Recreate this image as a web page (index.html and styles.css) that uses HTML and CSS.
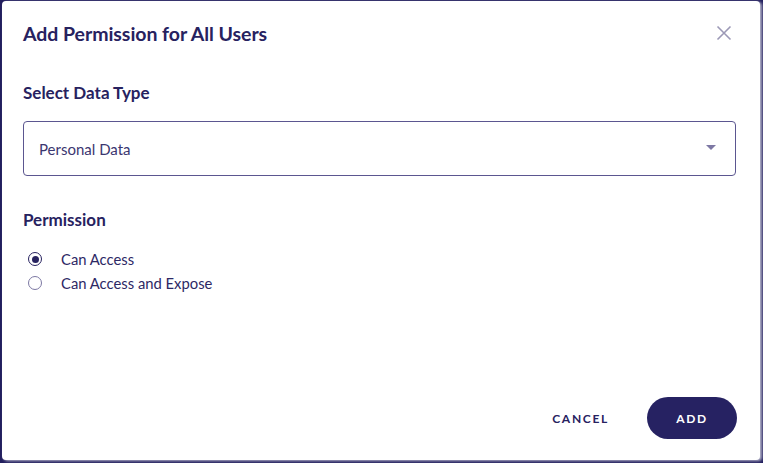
FILE: index.html
```html
<!DOCTYPE html>
<html>
<head>
<meta charset="utf-8">
<link rel="stylesheet" href="styles.css">
</head>
<body>
<div class="dialog">
  <div class="header">
    <h1 class="title">Add Permission for All Users</h1>
    <button class="close" aria-label="Close">
      <svg width="16" height="16" viewBox="0 0 16 16"><path d="M1.5 1.5 L14.5 14.5 M14.5 1.5 L1.5 14.5" stroke="#9c99b6" stroke-width="1.6" fill="none"/></svg>
    </button>
  </div>
  <div class="body">
    <h2 class="label">Select Data Type</h2>
    <div class="select">
      <span class="select-value">Personal Data</span>
      <span class="arrow"></span>
    </div>
    <h2 class="label perm">Permission</h2>
    <div class="radios">
      <label class="radio"><span class="dot checked"></span><span>Can Access</span></label>
      <label class="radio"><span class="dot"></span><span>Can Access and Expose</span></label>
    </div>
  </div>
  <div class="footer">
    <button class="btn-text">CANCEL</button>
    <button class="btn-primary">ADD</button>
  </div>
</div>
</body>
</html>
```
FILE: styles.css
```css
html, body { margin: 0; padding: 0; }
body {
  background: #221e5e;
  width: 763px;
  height: 463px;
  overflow: hidden;
  font-family: "Lato", "Noto Sans", sans-serif;
  color: #27225f;
}
.dialog {
  box-sizing: border-box;
  margin: 1px 3px 0 2px;
  width: 758px;
  height: 459px;
  background: #fff;
  border-radius: 4px;
  box-shadow: 2px 1px 3px rgba(200,200,215,0.9);
  display: flex;
  flex-direction: column;
  padding: 0 24px 0 21px;
}
.header {
  display: flex;
  align-items: center;
  justify-content: space-between;
  height: 64px;
}
.title {
  margin: 0;
  font-size: 19.5px;
  font-weight: 700;
  letter-spacing: -0.05px;
}
.close {
  border: 0;
  background: none;
  padding: 0;
  margin-right: 4px;
  width: 16px;
  height: 16px;
  display: flex;
}
.body { flex: 1; display: flex; flex-direction: column; }
.label {
  margin: 18px 0 0;
  font-size: 17px;
  font-weight: 700;
  line-height: 20px;
}
.select {
  margin-top: 18px;
  height: 55px;
  box-sizing: border-box;
  border: 1px solid #5b5690;
  border-radius: 4px;
  display: flex;
  align-items: center;
  justify-content: space-between;
  padding: 0 19px 0 15px;
}
.select-value { font-size: 15px; color: #3b3670; }
.arrow {
  width: 0; height: 0;
  border-left: 5px solid transparent;
  border-right: 5px solid transparent;
  border-top: 5px solid #7d78a4;
  margin-top: -2px;
}
.perm { margin-top: 34px; }
.radios { margin-top: 21px; display: flex; flex-direction: column; gap: 8px; }
.radio { display: flex; align-items: center; font-size: 14.8px; height: 16px; color: #2d2865; }
.dot {
  box-sizing: border-box;
  width: 14px; height: 14px;
  border: 1px solid #7c78a3;
  border-radius: 50%;
  margin: 0 19px 0 5px;
  position: relative;
}
.dot.checked { border: 1.5px solid #27225f; }
.dot.checked::after {
  content: "";
  position: absolute;
  left: 50%; top: 50%;
  width: 7px; height: 7px;
  margin: -3.5px 0 0 -3.5px;
  border-radius: 50%;
  background: #27225f;
}
.footer {
  display: flex;
  justify-content: flex-end;
  align-items: center;
  gap: 38px;
  padding-bottom: 21px;
  margin-right: -1px;
}
.btn-text, .btn-primary {
  font-family: inherit;
  font-size: 12px;
  font-weight: 700;
  letter-spacing: 1.7px;
  border: 0;
  cursor: pointer;
}
.btn-text { background: none; color: #27225f; padding: 0; }
.btn-primary {
  background: #262262;
  color: #fff;
  width: 90px;
  height: 42px;
  border-radius: 21px;
  padding: 0;
}
```
